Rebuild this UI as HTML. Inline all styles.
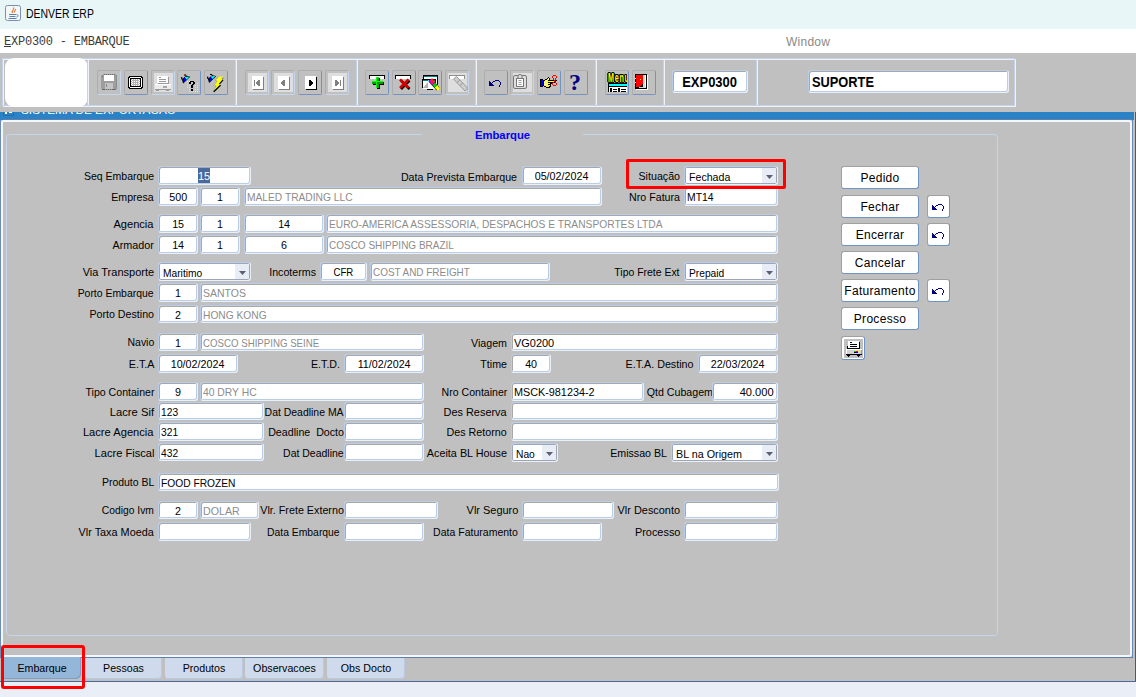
<!DOCTYPE html><html><head><meta charset="utf-8"><title>DENVER ERP</title><style>
*{box-sizing:border-box;margin:0;padding:0}
html,body{width:1136px;height:697px;overflow:hidden;background:#e9eef7;font-family:"Liberation Sans",sans-serif;font-size:11px;color:#000}
.abs{position:absolute}
#title{position:absolute;left:0;top:0;width:1136px;height:29px;background:#e8f6f7}
#title .t{position:absolute;left:26px;top:6px;font-size:12.5px;line-height:16px;color:#000;white-space:nowrap;transform:scaleX(.835);transform-origin:0 50%}
#menu{position:absolute;left:0;top:29px;width:1136px;height:24px;background:#fff;font-family:"Liberation Mono",monospace;font-size:12px;color:#333}
#menu .m{position:absolute;left:4px;top:6px;line-height:14px;letter-spacing:-0.23px;color:#3c3c3c}
#menu .w{position:absolute;left:786px;top:6px;letter-spacing:.25px;line-height:14px;font-family:"Liberation Sans",sans-serif;font-size:12px;color:#8a8a8a}
#win{position:absolute;left:0;top:53px;width:1136px;height:629px;background:#c0c0c0}
.lbl{position:absolute;white-space:pre;text-align:right;font-size:10.67px;line-height:14px;height:14px;color:#000}
.fld{position:absolute;background:#fff;border:1px solid;border-color:#b9cde8 #eaf0f7 #eaf0f7 #b9cde8;border-radius:3px;height:19px;padding-top:1px;font-size:11px;line-height:16px;white-space:nowrap;color:#000;box-shadow:inset 1px 1px 0 #a8a8a8,inset -1px -1px 0 #b9cde8}
.sx{display:inline-block;transform-origin:0 50%}.fld.c{text-align:center}
.fld.r{text-align:right;padding-right:3px}
.fld.l{text-align:left;padding-left:2px}
.fld.d{color:#8c8c8c}
.cmb{position:absolute;background:#fff;border:1px solid;border-color:#b9cde8 #eaf0f7 #eaf0f7 #b9cde8;border-radius:3px;height:19px;padding-top:2px;padding-left:4px;font-size:11px;line-height:16px;white-space:nowrap;color:#000;box-shadow:inset 0 0 0 1px #9ca6b8}
.cmb b{position:absolute;right:1px;top:1px;bottom:1px;width:14px;background:#e8ecf4;border-radius:0 2px 2px 0}.cmb svg{position:absolute;right:4px;top:8px}
.btn{position:absolute;background:#fff;border:1px solid;border-color:#a0a0a0 #6f93c4 #6f93c4 #a0a0a0;border-radius:3px;font-size:12px;line-height:22px;letter-spacing:.3px;text-align:center;white-space:nowrap;overflow:hidden}
.tb{position:absolute;width:24px;height:25px;border:1px solid;border-radius:2px;border-color:#adadad #7394c0 #7394c0 #adadad}
.tb.dis{border-color:#adadad #c5d7ee #c5d7ee #adadad}
.tb svg{position:absolute;left:0;top:0}
.sep{position:absolute;width:2px;background:linear-gradient(90deg,#c3d3ec 50%,#eef3fa 50%);top:7px;height:45px}
.tab{position:absolute;top:605px;height:21px;background:#cfdbec;font-size:10.67px;line-height:20px;text-align:center;border-radius:0 0 4px 4px;box-shadow:inset -1px -1px 0 #b9c9e0}
</style></head><body><div id="title"><svg class="abs" style="left:5px;top:5px" width="16" height="16" viewBox="0 0 16 16"><rect x="0.5" y="0.5" width="15" height="15" rx="2" fill="#f4f6f8" stroke="#7b8fa8"/><path d="M8.5 2.5c1.5 1.5-2.5 3-1 5.5M10.5 4c.5 1.2-1.8 2-1.2 3.6" stroke="#e8762a" stroke-width="1.1" fill="none"/><path d="M4 9.5h7M4.5 11.5h6M3.5 13.5h8" stroke="#5a7fae" stroke-width="1" fill="none"/><path d="M11.5 9.5c2 0 2 2.5 0 2.5" stroke="#5a7fae" fill="none"/></svg><div class="t">DENVER ERP</div></div><div id="menu"><div class="m"><u>E</u>XP0300 - EMBARQUE</div><div class="w">Window</div></div><div id="win"><div class="abs" style="left:3px;top:6px;width:1013px;height:48px;border:1px solid #eef3fa"></div><div class="abs" style="left:2px;top:5px;width:1013px;height:48px;border:1px solid #c3d3ec"></div><div class="abs" style="left:5px;top:5px;width:83px;height:49px;background:#fff;border-radius:9px"></div><div class="sep" style="left:87px"></div><div class="sep" style="left:235px"></div><div class="sep" style="left:356px"></div><div class="sep" style="left:475px"></div><div class="sep" style="left:595px"></div><div class="sep" style="left:663px"></div><div class="sep" style="left:756px"></div><div class="tb dis" style="left:97px;top:17px"></div><div class="tb" style="left:124px;top:17px"></div><div class="tb dis" style="left:151px;top:17px"></div><div class="tb" style="left:177px;top:17px"></div><div class="tb" style="left:204px;top:17px"></div><div class="tb dis" style="left:245px;top:17px"></div><div class="tb dis" style="left:271px;top:17px"></div><div class="tb" style="left:298px;top:17px"></div><div class="tb dis" style="left:325px;top:17px"></div><div class="tb" style="left:365px;top:17px"></div><div class="tb" style="left:392px;top:17px"></div><div class="tb" style="left:418px;top:17px"></div><div class="tb dis" style="left:445px;top:17px"></div><div class="tb" style="left:484px;top:17px"></div><div class="tb dis" style="left:510px;top:17px"></div><div class="tb" style="left:537px;top:17px"></div><div class="tb" style="left:564px;top:17px"></div><div class="tb" style="left:605px;top:17px"></div><div class="tb" style="left:632px;top:17px"></div><svg class="abs" style="left:0;top:0" width="1136" height="60" viewBox="0 53 1136 60" shape-rendering="crispEdges"><rect x="154" y="73" width="19" height="19" fill="#dedede"/><rect x="248" y="73" width="19" height="19" fill="#dedede"/><rect x="274" y="73" width="19" height="19" fill="#dedede"/><rect x="328" y="73" width="19" height="19" fill="#dedede"/><rect x="448" y="73" width="19" height="19" fill="#dedede"/><rect x="513" y="73" width="19" height="19" fill="#dedede"/><rect x="103" y="74" width="1" height="1" fill="#9e9e9e"/><rect x="104" y="74" width="1" height="1" fill="#6a6a6a"/><rect x="105" y="74" width="1" height="1" fill="#9e9e9e"/><rect x="106" y="74" width="1" height="1" fill="#6a6a6a"/><rect x="107" y="74" width="1" height="1" fill="#9e9e9e"/><rect x="108" y="74" width="1" height="1" fill="#6a6a6a"/><rect x="109" y="74" width="1" height="1" fill="#9e9e9e"/><rect x="110" y="74" width="1" height="1" fill="#6a6a6a"/><rect x="111" y="74" width="1" height="1" fill="#9e9e9e"/><rect x="112" y="74" width="1" height="1" fill="#6a6a6a"/><rect x="113" y="74" width="1" height="1" fill="#9e9e9e"/><rect x="114" y="74" width="1" height="1" fill="#6a6a6a"/><rect x="115" y="74" width="1" height="1" fill="#9e9e9e"/><rect x="101" y="75" width="3" height="1" fill="#9e9e9e"/><rect x="104" y="75" width="10" height="1" fill="#ffffff"/><rect x="114" y="75" width="2" height="1" fill="#9e9e9e"/><rect x="116" y="75" width="1" height="1" fill="#8e8e8e"/><rect x="101" y="76" width="1" height="1" fill="#9e9e9e"/><rect x="102" y="76" width="1" height="1" fill="#6a6a6a"/><rect x="103" y="76" width="1" height="1" fill="#9e9e9e"/><rect x="104" y="76" width="10" height="1" fill="#ffffff"/><rect x="114" y="76" width="2" height="1" fill="#9e9e9e"/><rect x="116" y="76" width="1" height="1" fill="#8e8e8e"/><rect x="101" y="77" width="3" height="1" fill="#9e9e9e"/><rect x="104" y="77" width="10" height="1" fill="#ffffff"/><rect x="114" y="77" width="2" height="1" fill="#9e9e9e"/><rect x="116" y="77" width="1" height="1" fill="#8e8e8e"/><rect x="101" y="78" width="3" height="1" fill="#9e9e9e"/><rect x="104" y="78" width="10" height="1" fill="#ffffff"/><rect x="114" y="78" width="2" height="1" fill="#9e9e9e"/><rect x="116" y="78" width="1" height="1" fill="#8e8e8e"/><rect x="101" y="79" width="3" height="1" fill="#9e9e9e"/><rect x="104" y="79" width="10" height="1" fill="#ffffff"/><rect x="114" y="79" width="2" height="1" fill="#9e9e9e"/><rect x="116" y="79" width="1" height="1" fill="#8e8e8e"/><rect x="101" y="80" width="3" height="1" fill="#9e9e9e"/><rect x="104" y="80" width="10" height="1" fill="#ffffff"/><rect x="114" y="80" width="2" height="1" fill="#9e9e9e"/><rect x="116" y="80" width="1" height="1" fill="#8e8e8e"/><rect x="101" y="81" width="15" height="1" fill="#9e9e9e"/><rect x="116" y="81" width="1" height="1" fill="#8e8e8e"/><rect x="101" y="82" width="15" height="1" fill="#9e9e9e"/><rect x="116" y="82" width="1" height="1" fill="#8e8e8e"/><rect x="101" y="83" width="4" height="1" fill="#9e9e9e"/><rect x="105" y="83" width="8" height="1" fill="#c4c4c4"/><rect x="113" y="83" width="3" height="1" fill="#9e9e9e"/><rect x="116" y="83" width="1" height="1" fill="#8e8e8e"/><rect x="101" y="84" width="4" height="1" fill="#9e9e9e"/><rect x="105" y="84" width="1" height="1" fill="#c4c4c4"/><rect x="106" y="84" width="1" height="1" fill="#8a8a8a"/><rect x="107" y="84" width="6" height="1" fill="#c4c4c4"/><rect x="113" y="84" width="3" height="1" fill="#9e9e9e"/><rect x="116" y="84" width="1" height="1" fill="#8e8e8e"/><rect x="101" y="85" width="4" height="1" fill="#9e9e9e"/><rect x="105" y="85" width="1" height="1" fill="#c4c4c4"/><rect x="106" y="85" width="1" height="1" fill="#8a8a8a"/><rect x="107" y="85" width="6" height="1" fill="#c4c4c4"/><rect x="113" y="85" width="3" height="1" fill="#9e9e9e"/><rect x="116" y="85" width="1" height="1" fill="#8e8e8e"/><rect x="101" y="86" width="4" height="1" fill="#9e9e9e"/><rect x="105" y="86" width="1" height="1" fill="#c4c4c4"/><rect x="106" y="86" width="1" height="1" fill="#8a8a8a"/><rect x="107" y="86" width="6" height="1" fill="#c4c4c4"/><rect x="113" y="86" width="3" height="1" fill="#9e9e9e"/><rect x="116" y="86" width="1" height="1" fill="#8e8e8e"/><rect x="101" y="87" width="4" height="1" fill="#9e9e9e"/><rect x="105" y="87" width="8" height="1" fill="#c4c4c4"/><rect x="113" y="87" width="3" height="1" fill="#9e9e9e"/><rect x="116" y="87" width="1" height="1" fill="#8e8e8e"/><rect x="101" y="88" width="4" height="1" fill="#9e9e9e"/><rect x="105" y="88" width="8" height="1" fill="#c4c4c4"/><rect x="113" y="88" width="3" height="1" fill="#9e9e9e"/><rect x="116" y="88" width="1" height="1" fill="#8e8e8e"/><rect x="102" y="89" width="3" height="1" fill="#6a6a6a"/><rect x="105" y="89" width="1" height="1" fill="#9e9e9e"/><rect x="106" y="89" width="1" height="1" fill="#6a6a6a"/><rect x="107" y="89" width="1" height="1" fill="#9e9e9e"/><rect x="108" y="89" width="1" height="1" fill="#6a6a6a"/><rect x="109" y="89" width="1" height="1" fill="#9e9e9e"/><rect x="110" y="89" width="1" height="1" fill="#6a6a6a"/><rect x="111" y="89" width="1" height="1" fill="#9e9e9e"/><rect x="112" y="89" width="4" height="1" fill="#6a6a6a"/><rect x="129" y="76" width="13" height="1" fill="#000000"/><rect x="128" y="77" width="2" height="1" fill="#000000"/><rect x="130" y="77" width="11" height="1" fill="#ffffff"/><rect x="141" y="77" width="2" height="1" fill="#000000"/><rect x="128" y="78" width="1" height="1" fill="#000000"/><rect x="129" y="78" width="1" height="1" fill="#ffffff"/><rect x="130" y="78" width="11" height="1" fill="#000000"/><rect x="141" y="78" width="1" height="1" fill="#ffffff"/><rect x="142" y="78" width="1" height="1" fill="#000000"/><rect x="128" y="79" width="1" height="1" fill="#000000"/><rect x="129" y="79" width="1" height="1" fill="#ffffff"/><rect x="130" y="79" width="1" height="1" fill="#000000"/><rect x="131" y="79" width="1" height="1" fill="#00ffff"/><rect x="132" y="79" width="1" height="1" fill="#ffffff"/><rect x="133" y="79" width="1" height="1" fill="#00ffff"/><rect x="134" y="79" width="1" height="1" fill="#ffffff"/><rect x="135" y="79" width="1" height="1" fill="#00ffff"/><rect x="136" y="79" width="1" height="1" fill="#ffffff"/><rect x="137" y="79" width="1" height="1" fill="#00ffff"/><rect x="138" y="79" width="1" height="1" fill="#ffffff"/><rect x="139" y="79" width="1" height="1" fill="#00ffff"/><rect x="140" y="79" width="1" height="1" fill="#000000"/><rect x="141" y="79" width="1" height="1" fill="#ffffff"/><rect x="142" y="79" width="1" height="1" fill="#000000"/><rect x="128" y="80" width="1" height="1" fill="#000000"/><rect x="129" y="80" width="1" height="1" fill="#ffffff"/><rect x="130" y="80" width="1" height="1" fill="#000000"/><rect x="131" y="80" width="1" height="1" fill="#ffffff"/><rect x="132" y="80" width="7" height="1" fill="#b0b0b0"/><rect x="139" y="80" width="1" height="1" fill="#ffffff"/><rect x="140" y="80" width="1" height="1" fill="#000000"/><rect x="141" y="80" width="1" height="1" fill="#ffffff"/><rect x="142" y="80" width="1" height="1" fill="#000000"/><rect x="128" y="81" width="1" height="1" fill="#000000"/><rect x="129" y="81" width="1" height="1" fill="#ffffff"/><rect x="130" y="81" width="1" height="1" fill="#000000"/><rect x="131" y="81" width="1" height="1" fill="#00ffff"/><rect x="132" y="81" width="1" height="1" fill="#ffffff"/><rect x="133" y="81" width="1" height="1" fill="#00ffff"/><rect x="134" y="81" width="1" height="1" fill="#ffffff"/><rect x="135" y="81" width="1" height="1" fill="#00ffff"/><rect x="136" y="81" width="1" height="1" fill="#ffffff"/><rect x="137" y="81" width="1" height="1" fill="#00ffff"/><rect x="138" y="81" width="1" height="1" fill="#ffffff"/><rect x="139" y="81" width="1" height="1" fill="#00ffff"/><rect x="140" y="81" width="1" height="1" fill="#000000"/><rect x="141" y="81" width="1" height="1" fill="#ffffff"/><rect x="142" y="81" width="1" height="1" fill="#000000"/><rect x="128" y="82" width="1" height="1" fill="#000000"/><rect x="129" y="82" width="1" height="1" fill="#ffffff"/><rect x="130" y="82" width="1" height="1" fill="#000000"/><rect x="131" y="82" width="1" height="1" fill="#ffffff"/><rect x="132" y="82" width="7" height="1" fill="#b0b0b0"/><rect x="139" y="82" width="1" height="1" fill="#ffffff"/><rect x="140" y="82" width="1" height="1" fill="#000000"/><rect x="141" y="82" width="1" height="1" fill="#ffffff"/><rect x="142" y="82" width="1" height="1" fill="#000000"/><rect x="128" y="83" width="1" height="1" fill="#000000"/><rect x="129" y="83" width="1" height="1" fill="#ffffff"/><rect x="130" y="83" width="1" height="1" fill="#000000"/><rect x="131" y="83" width="1" height="1" fill="#00ffff"/><rect x="132" y="83" width="1" height="1" fill="#ffffff"/><rect x="133" y="83" width="1" height="1" fill="#00ffff"/><rect x="134" y="83" width="1" height="1" fill="#ffffff"/><rect x="135" y="83" width="1" height="1" fill="#00ffff"/><rect x="136" y="83" width="1" height="1" fill="#ffffff"/><rect x="137" y="83" width="1" height="1" fill="#00ffff"/><rect x="138" y="83" width="1" height="1" fill="#ffffff"/><rect x="139" y="83" width="1" height="1" fill="#00ffff"/><rect x="140" y="83" width="1" height="1" fill="#000000"/><rect x="141" y="83" width="1" height="1" fill="#ffffff"/><rect x="142" y="83" width="1" height="1" fill="#000000"/><rect x="128" y="84" width="1" height="1" fill="#000000"/><rect x="129" y="84" width="1" height="1" fill="#ffffff"/><rect x="130" y="84" width="1" height="1" fill="#000000"/><rect x="131" y="84" width="1" height="1" fill="#ffffff"/><rect x="132" y="84" width="7" height="1" fill="#b0b0b0"/><rect x="139" y="84" width="1" height="1" fill="#ffffff"/><rect x="140" y="84" width="1" height="1" fill="#000000"/><rect x="141" y="84" width="1" height="1" fill="#ffffff"/><rect x="142" y="84" width="1" height="1" fill="#000000"/><rect x="128" y="85" width="1" height="1" fill="#000000"/><rect x="129" y="85" width="1" height="1" fill="#ffffff"/><rect x="130" y="85" width="1" height="1" fill="#000000"/><rect x="131" y="85" width="1" height="1" fill="#00ffff"/><rect x="132" y="85" width="1" height="1" fill="#ffffff"/><rect x="133" y="85" width="1" height="1" fill="#00ffff"/><rect x="134" y="85" width="1" height="1" fill="#ffffff"/><rect x="135" y="85" width="1" height="1" fill="#00ffff"/><rect x="136" y="85" width="1" height="1" fill="#ffffff"/><rect x="137" y="85" width="1" height="1" fill="#00ffff"/><rect x="138" y="85" width="1" height="1" fill="#ffffff"/><rect x="139" y="85" width="1" height="1" fill="#00ffff"/><rect x="140" y="85" width="1" height="1" fill="#000000"/><rect x="141" y="85" width="1" height="1" fill="#ffffff"/><rect x="142" y="85" width="1" height="1" fill="#000000"/><rect x="128" y="86" width="1" height="1" fill="#000000"/><rect x="129" y="86" width="1" height="1" fill="#ffffff"/><rect x="130" y="86" width="11" height="1" fill="#000000"/><rect x="141" y="86" width="1" height="1" fill="#ffffff"/><rect x="142" y="86" width="1" height="1" fill="#000000"/><rect x="128" y="87" width="2" height="1" fill="#000000"/><rect x="130" y="87" width="11" height="1" fill="#ffffff"/><rect x="141" y="87" width="2" height="1" fill="#000000"/><rect x="129" y="88" width="13" height="1" fill="#000000"/><rect x="157" y="76" width="11" height="7" fill="#ffffff"/><rect x="168" y="77" width="1" height="7" fill="#9a9a9a"/><rect x="158" y="83" width="11" height="1" fill="#9a9a9a"/><rect x="159" y="77" width="2" height="1" fill="#9a9a9a"/><rect x="159" y="79" width="7" height="1" fill="#9a9a9a"/><rect x="159" y="81" width="7" height="1" fill="#9a9a9a"/><rect x="155" y="84" width="16" height="1" fill="#ffffff"/><rect x="155" y="85" width="16" height="4" fill="#ececec"/><rect x="163" y="86" width="4" height="2" fill="#a8a8a8"/><rect x="155" y="89" width="16" height="1" fill="#9a9a9a"/><rect x="156" y="90" width="3" height="1" fill="#9a9a9a"/><rect x="166" y="90" width="3" height="1" fill="#9a9a9a"/><g shape-rendering="auto" transform="translate(178,70.6)"><path d="M6 4.4L8.2 4.7" stroke="#000" stroke-width="1.1"/><path d="M3.5 6.6L4 8.8" stroke="#000" stroke-width="1.3"/><path d="M3.9 9L5.1 13 12.3 6.2 8.2 4.9z" fill="#000"/><path d="M5.2 8.2L6.9 7 8.7 9.1 5.7 12z" fill="#0000ff"/><path d="M7 6.3L11.3 6 8.7 9.1 6.9 7z" fill="#00ffff"/><circle cx="7.3" cy="4.3" r="0.8" fill="#ff0000"/></g><rect x="187" y="81" width="1" height="1" fill="#ffff00"/><rect x="189" y="81" width="1" height="1" fill="#ffff00"/><rect x="187" y="83" width="1" height="1" fill="#ffff00"/><rect x="197" y="83" width="1" height="1" fill="#ffff00"/><rect x="187" y="85" width="1" height="1" fill="#ffff00"/><rect x="189" y="85" width="1" height="1" fill="#ffff00"/><rect x="195" y="85" width="1" height="1" fill="#ffff00"/><rect x="197" y="85" width="1" height="1" fill="#ffff00"/><rect x="187" y="87" width="1" height="1" fill="#ffff00"/><rect x="189" y="87" width="1" height="1" fill="#ffff00"/><rect x="195" y="87" width="1" height="1" fill="#ffff00"/><rect x="197" y="87" width="1" height="1" fill="#ffff00"/><rect x="189" y="89" width="1" height="1" fill="#ffff00"/><rect x="195" y="89" width="1" height="1" fill="#ffff00"/><rect x="197" y="89" width="1" height="1" fill="#ffff00"/><rect x="189" y="91" width="1" height="1" fill="#ffff00"/><rect x="191" y="91" width="1" height="1" fill="#ffff00"/><rect x="193" y="91" width="1" height="1" fill="#ffff00"/><rect x="195" y="91" width="1" height="1" fill="#ffff00"/><rect x="197" y="91" width="1" height="1" fill="#ffff00"/><rect x="190" y="81" width="4" height="1" fill="#000000"/><rect x="189" y="82" width="2" height="1" fill="#000000"/><rect x="193" y="82" width="2" height="1" fill="#000000"/><rect x="189" y="83" width="2" height="1" fill="#000000"/><rect x="193" y="83" width="2" height="1" fill="#000000"/><rect x="192" y="84" width="2" height="1" fill="#000000"/><rect x="191" y="85" width="2" height="1" fill="#000000"/><rect x="191" y="86" width="2" height="1" fill="#000000"/><rect x="191" y="87" width="2" height="1" fill="#000000"/><rect x="191" y="89" width="2" height="1" fill="#000000"/><rect x="191" y="90" width="2" height="1" fill="#000000"/><g shape-rendering="auto" transform="translate(204,70)"><path d="M6 4.4L8.2 4.7" stroke="#000" stroke-width="1.1"/><path d="M3.5 6.6L4 8.8" stroke="#000" stroke-width="1.3"/><path d="M3.9 9L5.1 13 12.3 6.2 8.2 4.9z" fill="#000"/><path d="M5.2 8.2L6.9 7 8.7 9.1 5.7 12z" fill="#0000ff"/><path d="M7 6.3L11.3 6 8.7 9.1 6.9 7z" fill="#00ffff"/></g><g shape-rendering="auto"><path d="M224.2 77.2L221.4 79.7 223.6 80.3 219.5 84.7 221.2 85.4 214.2 92.3 213.2 91.3z" fill="#000"/><path d="M218.6 76.6L215.4 80.3 217.6 81 213.8 85.2 216.5 85.8 214.6 88.5" fill="none" stroke="#8c8c8c" stroke-width=".8"/><path d="M223.3 76.4L218.8 76.7 215.7 80.3 217.8 81 214 85.2 216.7 85.8 213.3 91.3 220.2 84.5 218.5 83.8 222.6 79.3 220.5 78.8z" fill="#ffff00"/></g><rect x="252" y="76" width="11" height="13" fill="#ffffff"/><rect x="263" y="77" width="1" height="13" fill="#808080"/><rect x="253" y="89" width="11" height="1" fill="#808080"/><rect x="254" y="80" width="1" height="6" fill="#808080"/><rect x="259" y="80" width="1" height="6" fill="#808080"/><rect x="258" y="80" width="1" height="6" fill="#808080"/><rect x="257" y="81" width="1" height="4" fill="#808080"/><rect x="256" y="82" width="1" height="2" fill="#808080"/><rect x="278" y="76" width="11" height="13" fill="#ffffff"/><rect x="289" y="77" width="1" height="13" fill="#808080"/><rect x="279" y="89" width="11" height="1" fill="#808080"/><rect x="284" y="80" width="1" height="6" fill="#808080"/><rect x="283" y="80" width="1" height="6" fill="#808080"/><rect x="282" y="81" width="1" height="4" fill="#808080"/><rect x="281" y="82" width="1" height="2" fill="#808080"/><rect x="305" y="76" width="11" height="13" fill="#ffffff"/><rect x="316" y="77" width="1" height="13" fill="#000000"/><rect x="306" y="89" width="11" height="1" fill="#000000"/><rect x="309" y="80" width="1" height="6" fill="#000000"/><rect x="310" y="80" width="1" height="6" fill="#000000"/><rect x="311" y="81" width="1" height="4" fill="#000000"/><rect x="312" y="82" width="1" height="2" fill="#000000"/><rect x="332" y="76" width="11" height="13" fill="#ffffff"/><rect x="343" y="77" width="1" height="13" fill="#808080"/><rect x="333" y="89" width="11" height="1" fill="#808080"/><rect x="335" y="80" width="1" height="6" fill="#808080"/><rect x="336" y="80" width="1" height="6" fill="#808080"/><rect x="337" y="81" width="1" height="4" fill="#808080"/><rect x="338" y="82" width="1" height="2" fill="#808080"/><rect x="340" y="80" width="1" height="6" fill="#808080"/><rect x="369" y="75" width="16" height="1" fill="#000000"/><rect x="369" y="76" width="1" height="3" fill="#000000"/><rect x="384" y="76" width="1" height="3" fill="#000000"/><rect x="370" y="76" width="14" height="3" fill="#ffffff"/><rect x="377" y="78" width="3" height="11" fill="#000"/><rect x="373" y="82" width="11" height="3" fill="#000"/><rect x="376" y="77" width="3" height="11" fill="#00a000"/><rect x="372" y="81" width="11" height="3" fill="#00a000"/><rect x="376" y="77" width="1" height="11" fill="#00ff00"/><rect x="372" y="81" width="11" height="1" fill="#00ff00"/><rect x="376" y="77" width="3" height="1" fill="#00ff00"/><rect x="377" y="82" width="2" height="2" fill="#008000"/><rect x="395" y="75" width="16" height="1" fill="#000000"/><rect x="395" y="76" width="1" height="3" fill="#000000"/><rect x="410" y="76" width="1" height="3" fill="#000000"/><rect x="396" y="76" width="14" height="3" fill="#ffffff"/><g shape-rendering="auto"><path d="M401 80.5l8.5 8.5M409.5 80.5l-8.5 8.5" stroke="#000" stroke-width="2.6" fill="none"/><path d="M400 79.5l8.5 8.5M408.5 79.5l-8.5 8.5" stroke="#d40000" stroke-width="2.6" fill="none"/></g><rect x="423" y="75" width="15" height="1" fill="#000"/><rect x="437" y="75" width="1" height="10" fill="#000"/><rect x="423" y="75" width="1" height="4" fill="#000"/><rect x="424" y="76" width="13" height="1" fill="#008080"/><rect x="424" y="77" width="13" height="8" fill="#fff"/><rect x="422" y="79" width="14" height="1" fill="#000"/><rect x="422" y="79" width="1" height="9" fill="#000"/><rect x="423" y="80" width="12" height="1" fill="#008080"/><rect x="428" y="80" width="1" height="1" fill="#00ffff"/><rect x="433" y="80" width="1" height="1" fill="#00ffff"/><rect x="423" y="81" width="12" height="8" fill="#fff"/><rect x="435" y="79" width="1" height="5" fill="#000"/><rect x="427" y="89" width="6" height="1" fill="#000"/><g shape-rendering="auto"><path d="M423 88l5-6v6z" fill="#b0b0b0"/><path d="M428.5 81.5l3.2-2.8 7.6 8.6-2.6 3.2z" fill="#000"/><path d="M429 81l2.8-2.4 3.2 3.7-2.8 2.6z" fill="#ff00c0"/><path d="M430.6 79.6l1.6-1.3 2.8 3.3-1.7 1.6z" fill="#ff2000"/><path d="M432.3 85l2.8-2.6 2.2 2.6-2.7 2.6z" fill="#00d000"/><path d="M434.7 87.7l2.7-2.6 2.2 3.5-1.8 2.2z" fill="#ffff00"/></g><rect x="449" y="75" width="16" height="1" fill="#8e8e8e"/><rect x="449" y="76" width="1" height="3" fill="#8e8e8e"/><rect x="464" y="76" width="1" height="3" fill="#8e8e8e"/><rect x="450" y="76" width="14" height="3" fill="#ffffff"/><g shape-rendering="auto"><path d="M453.5 79l3-2.5 11 11.5-2.5 3z" fill="#cfcfcf" stroke="#9a9a9a" stroke-width="1"/><path d="M457 82.5l3-2.5M460 85.5l3-2.5" stroke="#9a9a9a"/></g><rect x="495" y="80" width="4" height="1" fill="#000080"/><rect x="489" y="81" width="1" height="1" fill="#000080"/><rect x="493" y="81" width="2" height="1" fill="#000080"/><rect x="499" y="81" width="1" height="1" fill="#000080"/><rect x="489" y="82" width="2" height="1" fill="#000080"/><rect x="492" y="82" width="1" height="1" fill="#000080"/><rect x="500" y="82" width="1" height="1" fill="#000080"/><rect x="489" y="83" width="3" height="1" fill="#000080"/><rect x="500" y="83" width="1" height="1" fill="#000080"/><rect x="489" y="84" width="4" height="1" fill="#000080"/><rect x="500" y="84" width="1" height="1" fill="#000080"/><rect x="489" y="85" width="5" height="1" fill="#000080"/><rect x="499" y="85" width="1" height="1" fill="#000080"/><rect x="499" y="86" width="1" height="1" fill="#000080"/><g shape-rendering="auto" fill="none" stroke="#787878"><rect x="513.5" y="75.5" width="13" height="13" rx="1.5"/><rect x="516.5" y="78.5" width="7" height="8" fill="#fff"/><path d="M518 78v-2.5q2-2.5 4 0V78" fill="#dedede"/><path d="M518.5 80.5h3M518.5 82.5h3M518.5 84.5h3" stroke="#9a9a9a"/></g><rect x="553" y="75" width="3" height="1" fill="#ff0000"/><rect x="552" y="76" width="1" height="1" fill="#ff0000"/><rect x="556" y="76" width="1" height="1" fill="#ff0000"/><rect x="548" y="77" width="1" height="1" fill="#000000"/><rect x="552" y="77" width="1" height="1" fill="#ff0000"/><rect x="556" y="77" width="1" height="1" fill="#ff0000"/><rect x="547" y="78" width="1" height="1" fill="#000000"/><rect x="548" y="78" width="1" height="1" fill="#ffff00"/><rect x="549" y="78" width="1" height="1" fill="#000000"/><rect x="553" y="78" width="1" height="1" fill="#ff0000"/><rect x="555" y="78" width="1" height="1" fill="#ff0000"/><rect x="540" y="79" width="3" height="1" fill="#000000"/><rect x="545" y="79" width="2" height="1" fill="#000000"/><rect x="547" y="79" width="1" height="1" fill="#ffff00"/><rect x="548" y="79" width="1" height="1" fill="#ffffff"/><rect x="549" y="79" width="1" height="1" fill="#000000"/><rect x="553" y="79" width="1" height="1" fill="#ff0000"/><rect x="555" y="79" width="1" height="1" fill="#ff0000"/><rect x="540" y="80" width="1" height="1" fill="#000000"/><rect x="541" y="80" width="2" height="1" fill="#0000ff"/><rect x="543" y="80" width="2" height="1" fill="#000000"/><rect x="545" y="80" width="1" height="1" fill="#ffff00"/><rect x="546" y="80" width="1" height="1" fill="#ffffff"/><rect x="547" y="80" width="1" height="1" fill="#ffff00"/><rect x="548" y="80" width="6" height="1" fill="#000000"/><rect x="554" y="80" width="1" height="1" fill="#ff0000"/><rect x="555" y="80" width="2" height="1" fill="#000000"/><rect x="540" y="81" width="1" height="1" fill="#000000"/><rect x="541" y="81" width="2" height="1" fill="#0000ff"/><rect x="543" y="81" width="1" height="1" fill="#000000"/><rect x="544" y="81" width="1" height="1" fill="#ffff00"/><rect x="545" y="81" width="1" height="1" fill="#ffffff"/><rect x="546" y="81" width="1" height="1" fill="#ffff00"/><rect x="547" y="81" width="1" height="1" fill="#ffffff"/><rect x="548" y="81" width="1" height="1" fill="#ffff00"/><rect x="549" y="81" width="1" height="1" fill="#ffffff"/><rect x="550" y="81" width="1" height="1" fill="#ffff00"/><rect x="551" y="81" width="1" height="1" fill="#ffffff"/><rect x="552" y="81" width="2" height="1" fill="#ffff00"/><rect x="554" y="81" width="1" height="1" fill="#ff0000"/><rect x="555" y="81" width="1" height="1" fill="#000000"/><rect x="540" y="82" width="1" height="1" fill="#000000"/><rect x="541" y="82" width="2" height="1" fill="#0000ff"/><rect x="543" y="82" width="1" height="1" fill="#000000"/><rect x="544" y="82" width="1" height="1" fill="#ffffff"/><rect x="545" y="82" width="1" height="1" fill="#ffff00"/><rect x="546" y="82" width="1" height="1" fill="#ffffff"/><rect x="547" y="82" width="1" height="1" fill="#ffff00"/><rect x="548" y="82" width="5" height="1" fill="#000000"/><rect x="553" y="82" width="1" height="1" fill="#ff0000"/><rect x="554" y="82" width="1" height="1" fill="#000000"/><rect x="555" y="82" width="1" height="1" fill="#ff0000"/><rect x="540" y="83" width="1" height="1" fill="#000000"/><rect x="541" y="83" width="2" height="1" fill="#0000ff"/><rect x="543" y="83" width="1" height="1" fill="#000000"/><rect x="544" y="83" width="1" height="1" fill="#ffff00"/><rect x="545" y="83" width="1" height="1" fill="#ffffff"/><rect x="546" y="83" width="1" height="1" fill="#ffff00"/><rect x="547" y="83" width="1" height="1" fill="#ffffff"/><rect x="548" y="83" width="2" height="1" fill="#ffff00"/><rect x="550" y="83" width="2" height="1" fill="#000000"/><rect x="552" y="83" width="1" height="1" fill="#ff0000"/><rect x="556" y="83" width="1" height="1" fill="#ff0000"/><rect x="540" y="84" width="1" height="1" fill="#000000"/><rect x="541" y="84" width="2" height="1" fill="#0000ff"/><rect x="543" y="84" width="1" height="1" fill="#000000"/><rect x="544" y="84" width="1" height="1" fill="#ffffff"/><rect x="545" y="84" width="1" height="1" fill="#ffff00"/><rect x="546" y="84" width="1" height="1" fill="#ffffff"/><rect x="547" y="84" width="1" height="1" fill="#ffff00"/><rect x="548" y="84" width="3" height="1" fill="#000000"/><rect x="552" y="84" width="1" height="1" fill="#ff0000"/><rect x="556" y="84" width="1" height="1" fill="#ff0000"/><rect x="540" y="85" width="1" height="1" fill="#000000"/><rect x="541" y="85" width="2" height="1" fill="#0000ff"/><rect x="543" y="85" width="1" height="1" fill="#000000"/><rect x="544" y="85" width="1" height="1" fill="#ffff00"/><rect x="545" y="85" width="1" height="1" fill="#ffffff"/><rect x="546" y="85" width="1" height="1" fill="#ffff00"/><rect x="547" y="85" width="1" height="1" fill="#ffffff"/><rect x="548" y="85" width="2" height="1" fill="#ffff00"/><rect x="550" y="85" width="1" height="1" fill="#000000"/><rect x="553" y="85" width="3" height="1" fill="#ff0000"/><rect x="540" y="86" width="3" height="1" fill="#000000"/><rect x="544" y="86" width="2" height="1" fill="#000000"/><rect x="546" y="86" width="1" height="1" fill="#ffff00"/><rect x="547" y="86" width="1" height="1" fill="#ffffff"/><rect x="548" y="86" width="1" height="1" fill="#ffff00"/><rect x="549" y="86" width="2" height="1" fill="#000000"/><rect x="546" y="87" width="4" height="1" fill="#000000"/><rect x="608" y="83" width="19" height="1" fill="#000"/><rect x="608" y="84" width="1" height="8" fill="#000"/><rect x="609" y="84" width="18" height="2" fill="#00ffff"/><rect x="609" y="86" width="18" height="1" fill="#000"/><rect x="609" y="87" width="18" height="5" fill="#fff"/><rect x="610" y="88" width="2" height="2" fill="#000"/><rect x="613" y="89" width="4" height="1" fill="#000"/><rect x="618" y="88" width="2" height="2" fill="#000"/><rect x="621" y="89" width="5" height="1" fill="#000"/><rect x="610" y="90" width="2" height="2" fill="#000"/><rect x="613" y="91" width="4" height="1" fill="#000"/><rect x="618" y="90" width="2" height="2" fill="#000"/><rect x="621" y="91" width="5" height="1" fill="#000"/><rect x="635" y="74" width="12" height="15" fill="#000"/><rect x="643" y="75" width="3" height="12" fill="#d8d8d8"/><rect x="645" y="75" width="1" height="12" fill="#fff"/><rect x="636" y="75" width="7" height="12" fill="#ff0000"/><rect x="640" y="86" width="3" height="1" fill="#000"/><rect x="641" y="85" width="2" height="1" fill="#000"/><rect x="642" y="84" width="1" height="1" fill="#000"/><rect x="640" y="79" width="1" height="1" fill="#ffff00"/><rect x="635" y="78" width="1" height="1" fill="#ffff00"/><rect x="635" y="82" width="1" height="1" fill="#ffff00"/><rect x="647" y="75" width="1" height="15" fill="#fff"/><rect x="636" y="89" width="12" height="1" fill="#fff"/><rect x="639" y="87" width="7" height="1" fill="#d8d8d8"/></svg><div class="abs" style="left:607px;top:19px;width:20px;height:11px;overflow:hidden"><span style="position:absolute;left:1px;top:0;color:#ffff00;font-weight:bold;font-size:12px;line-height:12px;white-space:nowrap;display:inline-block;transform:scaleX(.6);transform-origin:0 50%;letter-spacing:1.2px;text-shadow:1px 0 #000,-1px 0 #000,0 1px #000,0 -1px #000,1px 1px #000,-1px -1px #000,1px -1px #000,-1px 1px #000,2px 0 #000,-2px 0 #000">Menu</span></div><div class="abs" style="left:564px;top:16px;width:22px;height:26px;color:#000080;font-family:'Liberation Serif',serif;font-weight:bold;font-size:24px;line-height:26px;text-align:center">?</div><div class="fld c" style="left:672px;top:17px;width:76px;height:23px;padding-top:0;font-weight:bold;font-size:14px;line-height:22px"><span class="sx" style="transform:scaleX(.926);transform-origin:50% 50%">EXP0300</span></div><div class="fld l" style="left:808px;top:17px;width:201px;height:23px;padding-top:0;font-weight:bold;font-size:14px;line-height:22px;padding-left:3px"><span class="sx" style="transform:scaleX(.915)">SUPORTE</span></div><div class="abs" style="left:0;top:59px;width:1134px;height:8px;background:#2b82c5;overflow:hidden"><div class="abs" style="left:21px;top:-8px;font-size:11.8px;line-height:12px;color:#fff;white-space:nowrap">SISTEMA DE EXPORTACAO</div><div class="abs" style="left:3px;top:0;width:11px;height:4px;border:1px solid #2470ad;border-top:0"></div><div class="abs" style="left:5px;top:0;width:2px;height:2px;background:#fff"></div><div class="abs" style="left:9px;top:0;width:3px;height:1px;background:#fff"></div></div><div class="abs" style="left:3px;top:66px;width:1129px;height:1px;background:#5f7fae"></div><div class="abs" style="left:1135px;top:59px;width:1px;height:570px;background:#3c5a8c"></div><div class="abs" style="left:0;top:67px;width:1133px;height:538px;border-left:1px solid #6d8db8;border-right:1px solid #6d8db8;border-bottom:1px solid #6d8db8"><div class="abs" style="left:0;top:0;right:0;bottom:0;border:2px solid #f4f7fc;border-radius:3px 3px 3px 0"></div></div><div class="abs" style="left:6px;top:81px;width:992px;height:502px;border:1px solid #c6d5ea;border-radius:4px"></div><div class="abs" style="left:422px;top:75px;width:161px;height:14px;background:#c0c0c0;text-align:center;color:#0000ff;font-weight:bold;font-size:11.3px;line-height:14px">Embarque</div><div class="lbl" style="left:14px;width:140px;top:116px"><span class="sx" style="transform:scaleX(0.987);transform-origin:100% 50%">Seq Embarque</span></div><div class="fld c" style="left:158px;top:113px;width:93px"></div><div class="abs" style="left:198px;top:115px;width:12px;height:15px;background:#4a6a9c;color:#fff;font-size:11px;line-height:16px;text-align:center;padding-top:0px;overflow:hidden">15</div><div class="lbl" style="left:377px;width:140px;top:117px">Data Prevista Embarque</div><div class="fld c" style="left:522px;top:113px;width:80px"><span class="sx" style="transform:scaleX(0.975);transform-origin:50% 50%">05/02/2024</span></div><div class="lbl" style="left:540px;width:140px;top:116px">Situação</div><div class="cmb" style="left:684px;top:113px;width:94px"><span class="sx" style="transform:scaleX(0.965)">Fechada</span><b></b><svg width="7" height="4" viewBox="0 0 7 4"><path d="M0 0h7L3.5 4z" fill="#5a5f78"/></svg></div><div class="lbl" style="left:14px;width:140px;top:137px"><span class="sx" style="transform:scaleX(0.993);transform-origin:100% 50%">Empresa</span></div><div class="fld c" style="left:158px;top:134px;width:40px"><span class="sx" style="transform:scaleX(0.975);transform-origin:50% 50%">500</span></div><div class="fld c" style="left:200px;top:134px;width:40px"><span class="sx" style="transform:scaleX(0.975);transform-origin:50% 50%">1</span></div><div class="fld l d" style="left:244px;top:134px;width:358px"><span class="sx" style="transform:scaleX(0.93)">MALED TRADING LLC</span></div><div class="lbl" style="left:540px;width:140px;top:137px">Nro Fatura</div><div class="fld l" style="left:684px;top:134px;width:94px"><span class="sx" style="transform:scaleX(0.945)">MT14</span></div><div class="lbl" style="left:14px;width:140px;top:164px"><span class="sx" style="transform:scaleX(1.042);transform-origin:100% 50%">Agencia</span></div><div class="fld c" style="left:158px;top:161px;width:40px"><span class="sx" style="transform:scaleX(0.975);transform-origin:50% 50%">15</span></div><div class="fld c" style="left:200px;top:161px;width:40px"><span class="sx" style="transform:scaleX(0.975);transform-origin:50% 50%">1</span></div><div class="fld c" style="left:244px;top:161px;width:80px"><span class="sx" style="transform:scaleX(0.975);transform-origin:50% 50%">14</span></div><div class="fld l d" style="left:326px;top:161px;width:452px"><span class="sx" style="transform:scaleX(0.93)">EURO-AMERICA ASSESSORIA, DESPACHOS E TRANSPORTES LTDA</span></div><div class="lbl" style="left:14px;width:140px;top:185px"><span class="sx" style="transform:scaleX(1.012);transform-origin:100% 50%">Armador</span></div><div class="fld c" style="left:158px;top:182px;width:40px"><span class="sx" style="transform:scaleX(0.975);transform-origin:50% 50%">14</span></div><div class="fld c" style="left:200px;top:182px;width:40px"><span class="sx" style="transform:scaleX(0.975);transform-origin:50% 50%">1</span></div><div class="fld c" style="left:244px;top:182px;width:80px"><span class="sx" style="transform:scaleX(0.975);transform-origin:50% 50%">6</span></div><div class="fld l d" style="left:326px;top:182px;width:452px"><span class="sx" style="transform:scaleX(0.908)">COSCO SHIPPING BRAZIL</span></div><div class="lbl" style="left:14px;width:140px;top:212px"><span class="sx" style="transform:scaleX(1.033);transform-origin:100% 50%">Via Transporte</span></div><div class="cmb" style="left:158px;top:209px;width:93px"><span class="sx" style="transform:scaleX(0.93)">Maritimo</span><b></b><svg width="7" height="4" viewBox="0 0 7 4"><path d="M0 0h7L3.5 4z" fill="#5a5f78"/></svg></div><div class="lbl" style="left:176px;width:140px;top:212px">Incoterms</div><div class="fld c" style="left:320px;top:209px;width:47px"><span class="sx" style="transform:scaleX(0.87);transform-origin:50% 50%">CFR</span></div><div class="fld l d" style="left:370px;top:209px;width:180px"><span class="sx" style="transform:scaleX(0.902)">COST AND FREIGHT</span></div><div class="lbl" style="left:540px;width:140px;top:212px"><span class="sx" style="transform:scaleX(0.98);transform-origin:100% 50%">Tipo Frete Ext</span></div><div class="cmb" style="left:684px;top:209px;width:94px"><span class="sx" style="transform:scaleX(0.93)">Prepaid</span><b></b><svg width="7" height="4" viewBox="0 0 7 4"><path d="M0 0h7L3.5 4z" fill="#5a5f78"/></svg></div><div class="lbl" style="left:14px;width:140px;top:233px"><span class="sx" style="transform:scaleX(0.979);transform-origin:100% 50%">Porto Embarque</span></div><div class="fld c" style="left:158px;top:230px;width:40px"><span class="sx" style="transform:scaleX(0.975);transform-origin:50% 50%">1</span></div><div class="fld l d" style="left:200px;top:230px;width:578px"><span class="sx" style="transform:scaleX(0.952)">SANTOS</span></div><div class="lbl" style="left:14px;width:140px;top:254px">Porto Destino</div><div class="fld c" style="left:158px;top:252px;width:40px;height:18px"><span class="sx" style="transform:scaleX(0.975);transform-origin:50% 50%">2</span></div><div class="fld l d" style="left:200px;top:252px;width:578px;height:18px"><span class="sx" style="transform:scaleX(0.93)">HONG KONG</span></div><div class="lbl" style="left:14px;width:140px;top:282px"><span class="sx" style="transform:scaleX(0.981);transform-origin:100% 50%">Navio</span></div><div class="fld c" style="left:158px;top:280px;width:40px;height:18px"><span class="sx" style="transform:scaleX(0.975);transform-origin:50% 50%">1</span></div><div class="fld l d" style="left:200px;top:280px;width:224px;height:18px"><span class="sx" style="transform:scaleX(0.88)">COSCO SHIPPING SEINE</span></div><div class="lbl" style="left:367px;width:140px;top:283px">Viagem</div><div class="fld l" style="left:511px;top:280px;width:267px;height:18px"><span class="sx" style="transform:scaleX(0.995)">VG0200</span></div><div class="lbl" style="left:14px;width:140px;top:304px"><span class="sx" style="transform:scaleX(1.012);transform-origin:100% 50%">E.T.A</span></div><div class="fld c" style="left:158px;top:301px;width:80px"><span class="sx" style="transform:scaleX(0.975);transform-origin:50% 50%">10/02/2024</span></div><div class="lbl" style="left:200px;width:140px;top:304px">E.T.D.</div><div class="fld c" style="left:344px;top:301px;width:80px"><span class="sx" style="transform:scaleX(0.975);transform-origin:50% 50%">11/02/2024</span></div><div class="lbl" style="left:367px;width:140px;top:304px">Ttime</div><div class="fld c" style="left:511px;top:301px;width:40px"><span class="sx" style="transform:scaleX(0.975);transform-origin:50% 50%">40</span></div><div class="lbl" style="left:554px;width:140px;top:304px"><span class="sx" style="transform:scaleX(1.007);transform-origin:100% 50%">E.T.A. Destino</span></div><div class="fld c" style="left:698px;top:301px;width:80px"><span class="sx" style="transform:scaleX(0.975);transform-origin:50% 50%">22/03/2024</span></div><div class="lbl" style="left:14px;width:140px;top:332px"><span class="sx" style="transform:scaleX(0.993);transform-origin:100% 50%">Tipo Container</span></div><div class="fld c" style="left:158px;top:329px;width:40px"><span class="sx" style="transform:scaleX(0.975);transform-origin:50% 50%">9</span></div><div class="fld l d" style="left:200px;top:329px;width:224px"><span class="sx" style="transform:scaleX(0.94)">40 DRY HC</span></div><div class="lbl" style="left:367px;width:140px;top:332px"><span class="sx" style="transform:scaleX(0.991);transform-origin:100% 50%">Nro Container</span></div><div class="fld l" style="left:511px;top:329px;width:133px"><span class="sx" style="transform:scaleX(0.983)">MSCK-981234-2</span></div><div class="lbl" style="left:573px;width:140px;top:332px">Qtd Cubagem</div><div class="fld r" style="left:712px;top:329px;width:66px"><span class="sx" style="transform:scaleX(1.01);transform-origin:100% 50%">40.000</span></div><div class="lbl" style="left:14px;width:140px;top:352px"><span class="sx" style="transform:scaleX(1.056);transform-origin:100% 50%">Lacre Sif</span></div><div class="fld l" style="left:158px;top:349px;width:106px;height:18px"><span class="sx" style="transform:scaleX(0.93)">123</span></div><div class="lbl" style="left:204px;width:140px;top:352px"><span class="sx" style="transform:scaleX(0.98);transform-origin:100% 50%">Dat Deadline MA</span></div><div class="fld c" style="left:344px;top:349px;width:80px;height:18px"></div><div class="lbl" style="left:367px;width:140px;top:352px"><span class="sx" style="transform:scaleX(1.023);transform-origin:100% 50%">Des Reserva</span></div><div class="fld l" style="left:511px;top:349px;width:267px;height:18px"></div><div class="lbl" style="left:14px;width:140px;top:372px"><span class="sx" style="transform:scaleX(1.046);transform-origin:100% 50%">Lacre Agencia</span></div><div class="fld l" style="left:158px;top:369px;width:106px"><span class="sx" style="transform:scaleX(0.93)">321</span></div><div class="lbl" style="left:204px;width:140px;top:372px">Deadline  Docto</div><div class="fld c" style="left:344px;top:369px;width:80px"></div><div class="lbl" style="left:367px;width:140px;top:372px"><span class="sx" style="transform:scaleX(1.008);transform-origin:100% 50%">Des Retorno</span></div><div class="fld l" style="left:511px;top:369px;width:267px"></div><div class="lbl" style="left:14px;width:140px;top:393px"><span class="sx" style="transform:scaleX(1.043);transform-origin:100% 50%">Lacre Fiscal</span></div><div class="fld l" style="left:158px;top:390px;width:106px;height:18px"><span class="sx" style="transform:scaleX(0.93)">432</span></div><div class="lbl" style="left:204px;width:140px;top:393px"><span class="sx" style="transform:scaleX(0.982);transform-origin:100% 50%">Dat Deadline</span></div><div class="fld c" style="left:344px;top:390px;width:80px;height:18px"></div><div class="lbl" style="left:367px;width:140px;top:393px"><span class="sx" style="transform:scaleX(1.015);transform-origin:100% 50%">Aceita BL House</span></div><div class="cmb" style="left:511px;top:390px;width:47px"><span class="sx" style="transform:scaleX(0.93)">Nao</span><b></b><svg width="7" height="4" viewBox="0 0 7 4"><path d="M0 0h7L3.5 4z" fill="#5a5f78"/></svg></div><div class="lbl" style="left:527px;width:140px;top:393px">Emissao BL</div><div class="cmb" style="left:671px;top:390px;width:107px"><span class="sx" style="transform:scaleX(0.978)">BL na Origem</span><b></b><svg width="7" height="4" viewBox="0 0 7 4"><path d="M0 0h7L3.5 4z" fill="#5a5f78"/></svg></div><div class="lbl" style="left:14px;width:140px;top:422px"><span class="sx" style="transform:scaleX(0.983);transform-origin:100% 50%">Produto BL</span></div><div class="fld l" style="left:158px;top:420px;width:621px;height:18px"><span class="sx" style="transform:scaleX(0.93)">FOOD FROZEN</span></div><div class="lbl" style="left:14px;width:140px;top:450px"><span class="sx" style="transform:scaleX(0.966);transform-origin:100% 50%">Codigo Ivm</span></div><div class="fld c" style="left:158px;top:448px;width:40px;height:18px"><span class="sx" style="transform:scaleX(0.975);transform-origin:50% 50%">2</span></div><div class="fld l d" style="left:200px;top:448px;width:59px;height:18px"><span class="sx" style="transform:scaleX(0.97)">DOLAR</span></div><div class="lbl" style="left:204px;width:140px;top:450px"><span class="sx" style="transform:scaleX(1.009);transform-origin:100% 50%">Vlr. Frete Externo</span></div><div class="fld c" style="left:344px;top:448px;width:94px;height:18px"></div><div class="lbl" style="left:378px;width:140px;top:450px"><span class="sx" style="transform:scaleX(1.028);transform-origin:100% 50%">Vlr Seguro</span></div><div class="fld c" style="left:522px;top:448px;width:92px;height:18px"></div><div class="lbl" style="left:540px;width:140px;top:450px"><span class="sx" style="transform:scaleX(1.023);transform-origin:100% 50%">Vlr Desconto</span></div><div class="fld c" style="left:684px;top:448px;width:94px;height:18px"></div><div class="lbl" style="left:14px;width:140px;top:472px"><span class="sx" style="transform:scaleX(1.02);transform-origin:100% 50%">Vlr Taxa Moeda</span></div><div class="fld c" style="left:158px;top:469px;width:93px"></div><div class="lbl" style="left:200px;width:140px;top:472px"><span class="sx" style="transform:scaleX(0.973);transform-origin:100% 50%">Data Embarque</span></div><div class="fld c" style="left:344px;top:469px;width:80px"></div><div class="lbl" style="left:378px;width:140px;top:472px"><span class="sx" style="transform:scaleX(0.987);transform-origin:100% 50%">Data Faturamento</span></div><div class="fld c" style="left:522px;top:469px;width:80px"></div><div class="lbl" style="left:540px;width:140px;top:472px"><span class="sx" style="transform:scaleX(1.025);transform-origin:100% 50%">Processo</span></div><div class="fld c" style="left:684px;top:469px;width:94px"></div><div class="abs" style="left:626px;top:106px;width:160px;height:30px;border:3px solid #ff0000;border-radius:2px"></div><div class="btn" style="left:841px;top:113px;width:78px;height:23px">Pedido</div><div class="btn" style="left:841px;top:142px;width:78px;height:23px">Fechar</div><div class="btn" style="left:841px;top:170px;width:78px;height:23px">Encerrar</div><div class="btn" style="left:841px;top:198px;width:78px;height:23px">Cancelar</div><div class="btn" style="left:841px;top:226px;width:78px;height:23px">Faturamento</div><div class="btn" style="left:841px;top:254px;width:78px;height:23px">Processo</div><div class="btn" style="left:927px;top:142px;width:23px;height:23px"></div><div class="btn" style="left:927px;top:170px;width:23px;height:23px"></div><div class="btn" style="left:927px;top:226px;width:23px;height:23px"></div><div class="btn" style="left:841px;top:283px;width:24px;height:24px"></div><svg class="abs" style="left:830px;top:107px" width="140" height="260" viewBox="830 160 140 260" shape-rendering="crispEdges"><rect x="938" y="204" width="4" height="1" fill="#000080"/><rect x="932" y="205" width="1" height="1" fill="#000080"/><rect x="936" y="205" width="2" height="1" fill="#000080"/><rect x="942" y="205" width="1" height="1" fill="#000080"/><rect x="932" y="206" width="2" height="1" fill="#000080"/><rect x="935" y="206" width="1" height="1" fill="#000080"/><rect x="943" y="206" width="1" height="1" fill="#000080"/><rect x="932" y="207" width="3" height="1" fill="#000080"/><rect x="943" y="207" width="1" height="1" fill="#000080"/><rect x="932" y="208" width="4" height="1" fill="#000080"/><rect x="943" y="208" width="1" height="1" fill="#000080"/><rect x="932" y="209" width="5" height="1" fill="#000080"/><rect x="942" y="209" width="1" height="1" fill="#000080"/><rect x="942" y="210" width="1" height="1" fill="#000080"/><rect x="938" y="232" width="4" height="1" fill="#000080"/><rect x="932" y="233" width="1" height="1" fill="#000080"/><rect x="936" y="233" width="2" height="1" fill="#000080"/><rect x="942" y="233" width="1" height="1" fill="#000080"/><rect x="932" y="234" width="2" height="1" fill="#000080"/><rect x="935" y="234" width="1" height="1" fill="#000080"/><rect x="943" y="234" width="1" height="1" fill="#000080"/><rect x="932" y="235" width="3" height="1" fill="#000080"/><rect x="943" y="235" width="1" height="1" fill="#000080"/><rect x="932" y="236" width="4" height="1" fill="#000080"/><rect x="943" y="236" width="1" height="1" fill="#000080"/><rect x="932" y="237" width="5" height="1" fill="#000080"/><rect x="942" y="237" width="1" height="1" fill="#000080"/><rect x="942" y="238" width="1" height="1" fill="#000080"/><rect x="938" y="288" width="4" height="1" fill="#000080"/><rect x="932" y="289" width="1" height="1" fill="#000080"/><rect x="936" y="289" width="2" height="1" fill="#000080"/><rect x="942" y="289" width="1" height="1" fill="#000080"/><rect x="932" y="290" width="2" height="1" fill="#000080"/><rect x="935" y="290" width="1" height="1" fill="#000080"/><rect x="943" y="290" width="1" height="1" fill="#000080"/><rect x="932" y="291" width="3" height="1" fill="#000080"/><rect x="943" y="291" width="1" height="1" fill="#000080"/><rect x="932" y="292" width="4" height="1" fill="#000080"/><rect x="943" y="292" width="1" height="1" fill="#000080"/><rect x="932" y="293" width="5" height="1" fill="#000080"/><rect x="942" y="293" width="1" height="1" fill="#000080"/><rect x="942" y="294" width="1" height="1" fill="#000080"/><rect x="844" y="339" width="19" height="19" fill="#c0c0c0"/><rect x="848" y="341" width="11" height="7" fill="#fff"/><rect x="859" y="342" width="1" height="7" fill="#000"/><rect x="848" y="348" width="12" height="1" fill="#000"/><rect x="847" y="346" width="1" height="3" fill="#000"/><rect x="850" y="342" width="2" height="1" fill="#000"/><rect x="850" y="344" width="7" height="1" fill="#000"/><rect x="850" y="346" width="7" height="1" fill="#000"/><rect x="846" y="349" width="16" height="1" fill="#fff"/><rect x="846" y="350" width="16" height="4" fill="#d4d4d4"/><rect x="846" y="350" width="1" height="4" fill="#fff"/><rect x="861" y="350" width="1" height="4" fill="#9a9a9a"/><rect x="854" y="351" width="2" height="1" fill="#00d000"/><rect x="856" y="351" width="2" height="1" fill="#ff0000"/><rect x="858" y="351" width="2" height="1" fill="#ffff00"/><rect x="854" y="352" width="2" height="1" fill="#000"/><rect x="856" y="352" width="2" height="1" fill="#0000ff"/><rect x="846" y="354" width="16" height="1" fill="#000"/><rect x="847" y="355" width="3" height="1" fill="#000"/><rect x="857" y="355" width="3" height="1" fill="#000"/><rect x="848" y="356" width="1" height="1" fill="#000"/><rect x="858" y="356" width="1" height="1" fill="#000"/></svg><div class="abs" style="left:3px;top:604px;width:1130px;height:1px;background:#5f7eaa"></div><div class="tab" style="left:3px;top:604px;width:78px;height:22px;line-height:22px;background:#94b6d8;border-radius:0 0 5px 0;box-shadow:inset -1px -1px 0 #7f9fc8">Embarque</div><div class="tab" style="left:85px;width:77px">Pessoas</div><div class="tab" style="left:165px;width:78px">Produtos</div><div class="tab" style="left:245px;width:79px">Observacoes</div><div class="tab" style="left:327px;width:78px">Obs Docto</div><div class="abs" style="left:0;top:628px;width:1136px;height:1px;background:#4a6a9c"></div><div class="abs" style="left:1px;top:592px;width:84px;height:44px;border:3px solid #ff0000;border-radius:3px"></div></div></body></html>
